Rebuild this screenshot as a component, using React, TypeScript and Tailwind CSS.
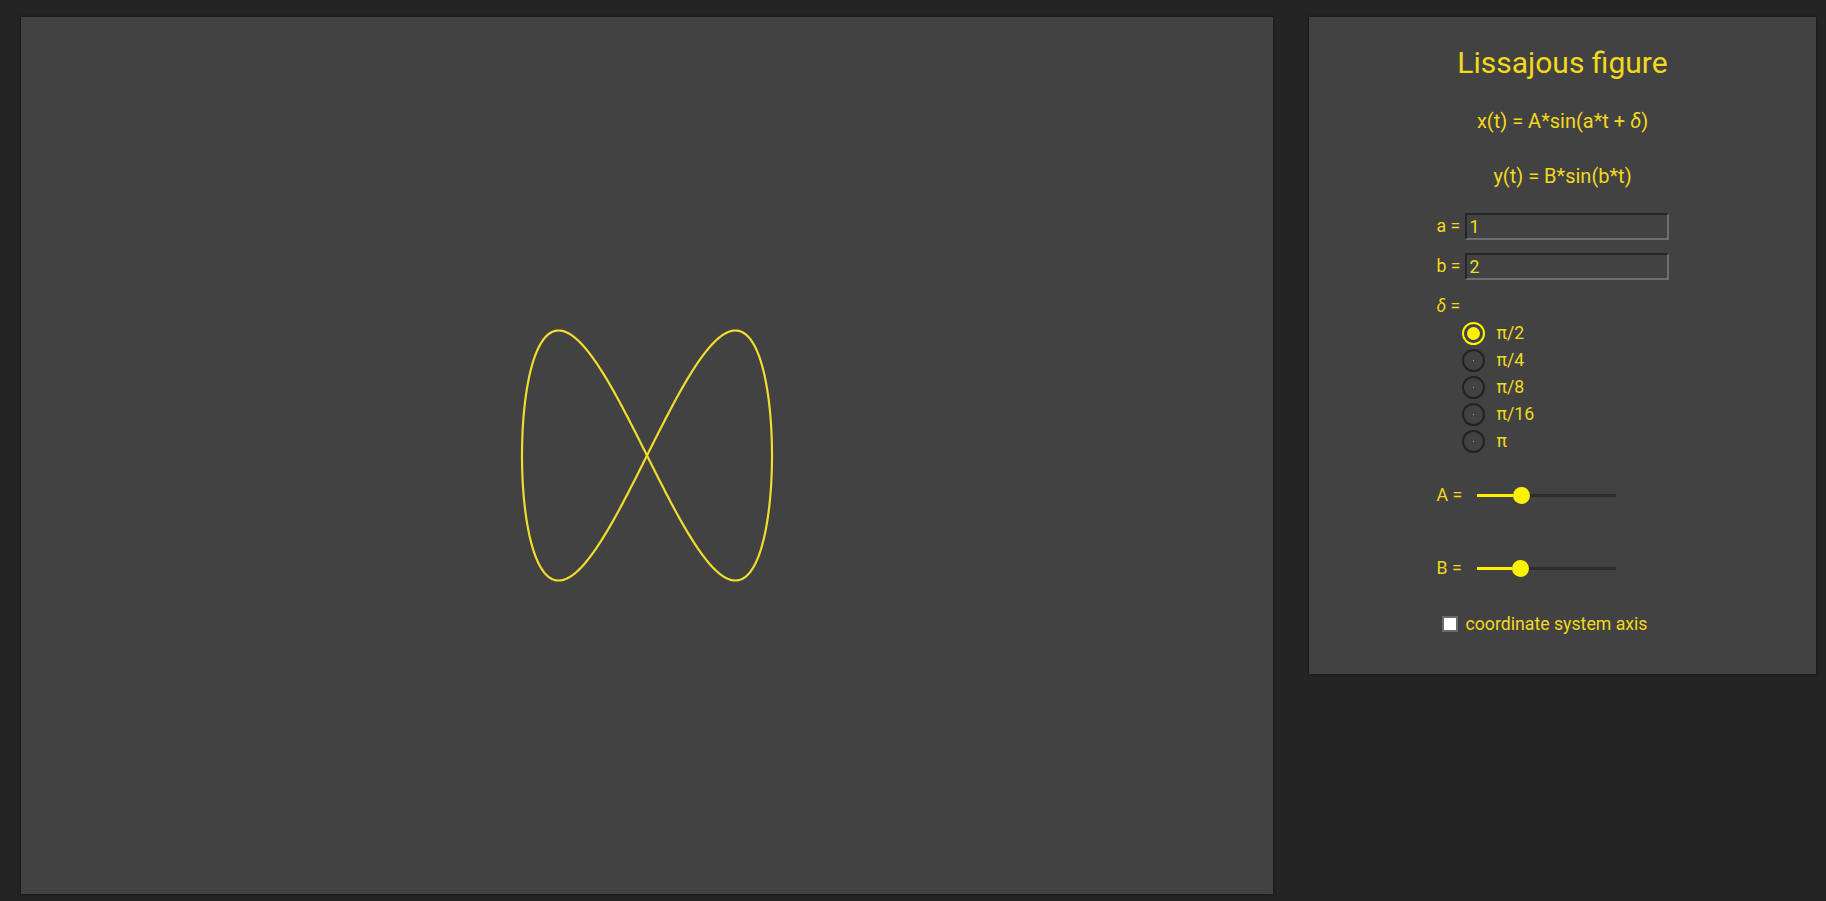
import { useMemo, useState } from 'react';

const W = 1252;
const H = 877;

const deltas = [
  { id: 'pi2', label: 'π/2', value: Math.PI / 2 },
  { id: 'pi4', label: 'π/4', value: Math.PI / 4 },
  { id: 'pi8', label: 'π/8', value: Math.PI / 8 },
  { id: 'pi16', label: 'π/16', value: Math.PI / 16 },
  { id: 'pi', label: 'π', value: Math.PI },
];

function Curve({ a, b, delta, A, B }: { a: number; b: number; delta: number; A: number; B: number }) {
  const d = useMemo(() => {
    const cx = W / 2;
    const cy = H / 2;
    const pts: string[] = [];
    const n = 1200;
    for (let i = 0; i <= n; i++) {
      const t = (i / n) * Math.PI * 2;
      const x = cx + A * Math.sin(a * t + delta);
      const y = cy - B * Math.sin(b * t);
      pts.push(`${i === 0 ? 'M' : 'L'}${x.toFixed(2)},${y.toFixed(2)}`);
    }
    return pts.join(' ') + ' Z';
  }, [a, b, delta, A, B]);

  return (
    <svg width={W} height={H} viewBox={`0 0 ${W} ${H}`} className="block">
      <path d={d} fill="none" stroke="#f2dc2c" strokeWidth={2.2} />
    </svg>
  );
}

function Radio({ checked, label, onClick }: { checked: boolean; label: string; onClick: () => void }) {
  return (
    <div className="flex items-center h-[27px] cursor-pointer" onClick={onClick}>
      <span
        className={`w-[23px] h-[23px] rounded-full border-2 flex items-center justify-center ${
          checked ? 'border-[#fff200]' : 'border-[#222222]'
        }`}
      >
        {checked ? (
          <span className="w-[13px] h-[13px] rounded-full bg-[#fff200]" />
        ) : (
          <span className="w-[1px] h-[1px] bg-[#9a9a9a]" />
        )}
      </span>
      <span className="ml-[12px]">{label}</span>
    </div>
  );
}

function Slider({ label, fill }: { label: string; fill: number }) {
  return (
    <div className="flex items-center h-[20px]">
      <span className="w-[40px]">{label}</span>
      <div className="flex items-center w-[139px]">
        <div className="h-[3px] bg-[#fff200]" style={{ width: fill }} />
        <div className="w-[17px] h-[17px] rounded-full bg-[#fff200] shrink-0" />
        <div className="h-[3px] flex-1 bg-[#2c2c2c]" />
      </div>
    </div>
  );
}

export default function App() {
  const [a, setA] = useState('1');
  const [b, setB] = useState('2');
  const [sel, setSel] = useState('pi2');
  const [axis, setAxis] = useState(false);

  const delta = deltas.find((x) => x.id === sel)?.value ?? Math.PI / 2;

  return (
    <div
      className="min-h-screen bg-[#242424] flex items-start pt-[17px] pl-[21px] gap-[36px] text-[#f2d91c]"
      style={{ fontFamily: 'Roboto, "Liberation Sans", sans-serif' }}
    >
      <div className="w-[1252px] h-[877px] bg-[#424242] shadow-[0_0_3px_rgba(0,0,0,0.6)] shrink-0">
        <Curve a={Number(a) || 1} b={Number(b) || 2} delta={delta} A={125} B={125} />
      </div>

      <div className="w-[507px] h-[657px] bg-[#424242] shadow-[0_0_3px_rgba(0,0,0,0.6)] shrink-0 flex flex-col items-center pt-[26px]">
        <h1 className="text-[30px] leading-[40px]">Lissajous figure</h1>
        <p className="text-[20px] leading-[24px] mt-[26px]">
          x(t) = A*sin(a*t + <i>δ</i>)
        </p>
        <p className="text-[20px] leading-[24px] mt-[31px]">y(t) = B*sin(b*t)</p>

        <div className="w-[254px] pl-[1px] text-[17.7px] mt-[25px] flex flex-col">
          <label className="flex items-center h-[27px]">
            <span className="w-[28px]">a =</span>
            <input
              value={a}
              onChange={(e) => setA(e.target.value)}
              className="w-[204px] h-[27px] bg-[#424242] border-2 border-t-[#262626] border-l-[#262626] border-b-[#6e6e6e] border-r-[#6e6e6e] px-[3px] text-[#e6e01e] outline-none"
            />
          </label>
          <label className="flex items-center h-[27px] mt-[13px]">
            <span className="w-[28px]">b =</span>
            <input
              value={b}
              onChange={(e) => setB(e.target.value)}
              className="w-[204px] h-[27px] bg-[#424242] border-2 border-t-[#262626] border-l-[#262626] border-b-[#6e6e6e] border-r-[#6e6e6e] px-[3px] text-[#e6e01e] outline-none"
            />
          </label>

          <div className="h-[24px] leading-[24px] mt-[14px]">
            <i>δ</i> =
          </div>
          <div className="flex flex-col pl-[25px] mt-[2px]">
            {deltas.map((d) => (
              <Radio key={d.id} checked={sel === d.id} label={d.label} onClick={() => setSel(d.id)} />
            ))}
          </div>

          <div className="mt-[30px]">
            <Slider label="A =" fill={36} />
          </div>
          <div className="mt-[53px]">
            <Slider label="B =" fill={35} />
          </div>

          <label className="flex items-center mt-[33px] pl-[5px] cursor-pointer">
            <span
              onClick={() => setAxis(!axis)}
              className={`w-[16px] h-[16px] border-2 border-[#6a6a6a] ${axis ? 'bg-[#fff200]' : 'bg-white'}`}
            />
            <span className="ml-[8px]">coordinate system axis</span>
          </label>
        </div>
      </div>
    </div>
  );
}
